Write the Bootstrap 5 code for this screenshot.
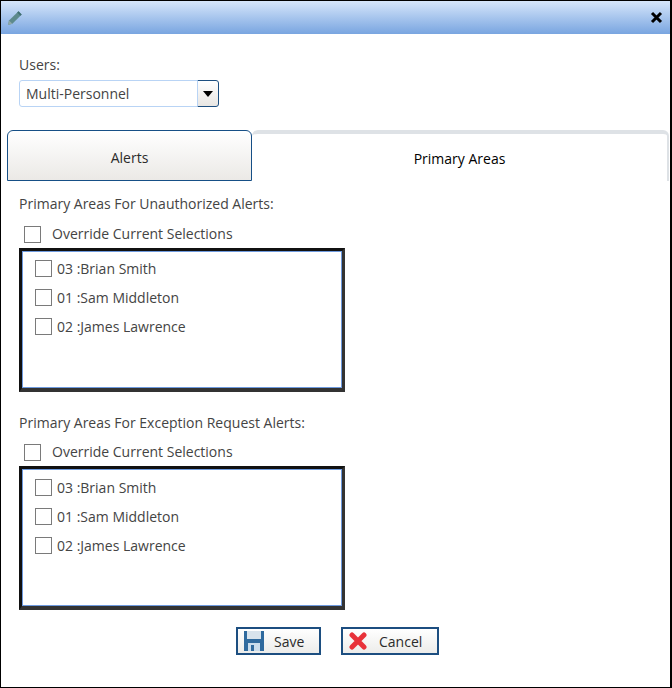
<!DOCTYPE html>
<html lang="en">
<head>
  <meta charset="UTF-8" />
  <meta name="viewport" content="width=device-width, initial-scale=1" />
  <title>Primary Areas</title>
  <link href="https://cdn.jsdelivr.net/npm/bootstrap@5.3.3/dist/css/bootstrap.min.css" rel="stylesheet" />
  <style>
    html, body { height: 100%; }
    body { font-family: "Open Sans", "Liberation Sans", sans-serif; font-size: 14px; line-height: 20px; color: #444; background: #fff; }
    .dlg-frame { width: 672px; height: 688px; border: solid #000; border-width: 1px 2px 1px 1px; overflow: hidden; }
    .dlg-title { height: 33px; padding: 0 7px 0 5px; background: linear-gradient(#d6e6fb, #79a5e0); }
    .dlg-close { width: 13px; height: 13px; border: 0; padding: 0; background: none; }
    .user-box { margin: 21px 0 0 18px; }
    .user-combo { width: 200px; height: 27px; margin-top: 5px; }
    .user-combo .form-control { height: 27px; padding: 0 6px; border: 1px solid #b9d4f5; border-radius: 3px 0 0 3px; font-size: 14px; color: #444; box-shadow: none; }
    .combo-arrow { width: 22px; height: 27px; padding: 0; border: 1px solid #1c4e80; border-radius: 0 3px 3px 0; background: linear-gradient(#fff, #e8e6e3); display: flex; align-items: center; justify-content: center; }
    .combo-arrow::after { content: ""; border: 5px solid transparent; border-top: 6px solid #000; border-bottom: 0; }
    .dlg-tabs { margin: 23px 0 0 6px; width: 662px; height: 51px; border: 0; flex-wrap: nowrap; }
    .dlg-tabs .nav-link { height: 51px; margin: 0; display: flex; align-items: center; justify-content: center; font-size: 14px; color: #2b2b2b; }
    .dlg-tabs .tab-alerts { width: 245px; padding-top: 12px; border: 1px solid #164f86; border-radius: 6px 6px 0 0; background: linear-gradient(#fff, #ebe9e6); }
    .dlg-tabs .tab-areas { width: 417px; padding-top: 10px; border: solid #a3c5ef; border-width: 4px 2px 0 0; border-top-color: #f7a52c; border-radius: 6px 6px 0 0; background: #fff; }
    .area-group { margin: 13px 0 0 18px; }
    .area-second { margin-top: 21px; }
    .area-title { height: 20px; }
    .override-row { margin: 10px 0 0 5px; height: 20px; gap: 11px; }
    .area-second .override-row { margin-top: 9px; }
    .form-check-input.box-check { width: 17px; height: 17px; margin: 0; flex: none; border: 1px solid #7a7a7a; border-radius: 0; background-color: #fff; }
    .area-list { width: 326px; height: 144px; margin-top: 4px; padding: 3px 13px 0; border: solid; border-width: 3px 3px 4px 3px; border-color: #111 #333 #333 #111; box-shadow: inset 0 0 0 1px #6e9ade; }
    .area-second .area-list { padding-top: 4px; }
    .area-row { height: 29px; gap: 5px; align-items: center; }
    .dlg-actions { margin-top: 17px; padding-left: 4px; gap: 20px; }
    .dlg-btn { height: 28px; padding: 0; display: flex; align-items: center; border: 2px solid #1c4e80; border-radius: 0; background: linear-gradient(#fff, #ececea); font-size: 14px; color: #2b2b2b; }
    .btn-save { width: 85px; padding-left: 6px; gap: 10px; }
    .btn-cancel { width: 98px; padding-left: 6px; gap: 12px; }
  </style>
</head>
<body>
  <div class="dlg-frame d-flex flex-column">

    <div class="dlg-title d-flex align-items-center justify-content-between">
      <svg width="18" height="18" viewBox="0 0 18 18">
        <path d="M2 16l1-4.5L12.5 2.2l3.2 3.2L6.400 14.800z" fill="#5d8a8c" />
        <path d="M2 16l1-4.500 3.400 3.300z" fill="#8fa8a8" />
        <path d="M12.500 2.200l3.200 3.200-1.300 1.300-3.200-3.200z" fill="#3f6f72" />
      </svg>
      <button class="dlg-close" aria-label="Close">
        <svg width="13" height="13" viewBox="0 0 13 13" class="d-block"><path d="M2 2l9 9M11 2l-9 9" stroke="#000" stroke-width="3" /></svg>
      </button>
    </div>

    <div class="user-box">
      <div>Users:</div>
      <div class="input-group flex-nowrap user-combo">
        <input class="form-control" type="text" value="Multi-Personnel" />
        <button class="combo-arrow" aria-label="Open"></button>
      </div>
    </div>

    <ul class="nav nav-tabs dlg-tabs">
      <li class="nav-item"><a class="nav-link tab-alerts" href="#">Alerts</a></li>
      <li class="nav-item"><a class="nav-link active tab-areas" href="#">Primary Areas</a></li>
    </ul>

    <div class="area-group">
      <div class="area-title">Primary Areas For Unauthorized Alerts:</div>
      <div class="override-row d-flex align-items-center">
        <input class="form-check-input box-check" type="checkbox" />
        <span>Override Current Selections</span>
      </div>
      <div class="area-list">
        <div class="area-row d-flex"><input class="form-check-input box-check" type="checkbox" /><span>03 :Brian Smith</span></div>
        <div class="area-row d-flex"><input class="form-check-input box-check" type="checkbox" /><span>01 :Sam Middleton</span></div>
        <div class="area-row d-flex"><input class="form-check-input box-check" type="checkbox" /><span>02 :James Lawrence</span></div>
      </div>
    </div>

    <div class="area-group area-second">
      <div class="area-title">Primary Areas For Exception Request Alerts:</div>
      <div class="override-row d-flex align-items-center">
        <input class="form-check-input box-check" type="checkbox" />
        <span>Override Current Selections</span>
      </div>
      <div class="area-list">
        <div class="area-row d-flex"><input class="form-check-input box-check" type="checkbox" /><span>03 :Brian Smith</span></div>
        <div class="area-row d-flex"><input class="form-check-input box-check" type="checkbox" /><span>01 :Sam Middleton</span></div>
        <div class="area-row d-flex"><input class="form-check-input box-check" type="checkbox" /><span>02 :James Lawrence</span></div>
      </div>
    </div>

    <div class="d-flex justify-content-center dlg-actions">
      <button class="btn dlg-btn btn-save">
        <svg width="20" height="20" viewBox="0 0 20 20">
          <path d="M0 0h20v20H0z" fill="#2f6a9e" />
          <path d="M3 0h14v8H3z" fill="#d8e3ec" />
          <path d="M4 12h12v8H4z" fill="#c9dcec" />
          <path d="M7 14h3v6H7z" fill="#2f6a9e" />
        </svg>
        <span>Save</span>
      </button>
      <button class="btn dlg-btn btn-cancel">
        <svg width="18" height="18" viewBox="0 0 18 18">
          <path d="M3 3l12 12M15 3L3 15" stroke="#e8323a" stroke-width="5" stroke-linecap="round" />
        </svg>
        <span>Cancel</span>
      </button>
    </div>
  </div>
  <script src="https://cdn.jsdelivr.net/npm/bootstrap@5.3.3/dist/js/bootstrap.bundle.min.js"></script>
</body>
</html>
